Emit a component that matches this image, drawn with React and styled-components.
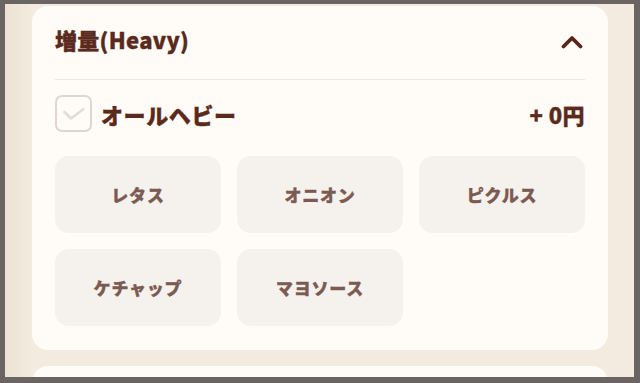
import React from "react";
import styled, { createGlobalStyle } from "styled-components";

const Global = createGlobalStyle`
  html, body { margin: 0; padding: 0; }
  body { font-family: "Noto Sans CJK JP", "Noto Sans", sans-serif; }
  * { box-sizing: border-box; }
`;

const Frame = styled.div`
  width: 640px;
  height: 383px;
  border-style: solid;
  border-color: #6a6462;
  border-width: 4px 6px 6px 5px;
  overflow: hidden;
`;

const Scroller = styled.div`
  height: 100%;
  background: linear-gradient(to right, #ece2d4 0px, #f3ebdf 26px, #f3ebdf 100%);
  padding: 2px 26px 0 27px;
  display: flex;
  flex-direction: column;
  gap: 16px;
`;

const Card = styled.section`
  background: #fffcf8;
  border-radius: 16px;
  padding: 0 23px 24px;
  flex-shrink: 0;
  min-height: ${(p) => p.$minH || 0}px;
`;

const Header = styled.div`
  height: 74px;
  display: flex;
  align-items: center;
  justify-content: space-between;
  border-bottom: 1px solid #eee8e2;
  padding-bottom: 8px;
`;

const Heavy = `
  font-weight: 900;
  -webkit-text-stroke: 0.35px currentColor;
`;

const Title = styled.h2`
  margin: 0;
  font-size: 22px;
  ${Heavy}
  color: #5a2a1c;
  letter-spacing: 0.3px;
`;

const ToggleIcon = styled.svg`
  width: 22px;
  height: 14px;
  margin-right: 2px;
  margin-top: 7px;
`;

const OptionRow = styled.label`
  display: flex;
  align-items: center;
  margin-top: 15px;
  height: 37px;
  gap: 9px;
`;

const Box = styled.span`
  width: 37px;
  height: 37px;
  border: 2px solid #dfd6d0;
  border-radius: 7px;
  background: #fffcf8;
  display: flex;
  align-items: center;
  justify-content: center;
  flex-shrink: 0;
`;

const OptionName = styled.span`
  font-size: 22px;
  ${Heavy}
  color: #5a2a1c;
  flex: 1;
  letter-spacing: 0.6px;
`;

const Price = styled.span`
  font-size: 22px;
  ${Heavy}
  color: #5a2a1c;
  letter-spacing: 0.4px;
`;

const Grid = styled.div`
  display: grid;
  grid-template-columns: repeat(3, 1fr);
  grid-auto-rows: 77px;
  gap: 16px;
  margin-top: 24px;
`;

const Chip = styled.button`
  border: none;
  border-radius: 14px;
  background: #f5f1ed;
  color: #7b5a52;
  font-family: inherit;
  font-size: 17px;
  ${Heavy}
  letter-spacing: 0.8px;
  display: flex;
  align-items: center;
  justify-content: center;
  padding: 0;
`;

const items = ["レタス", "オニオン", "ピクルス", "ケチャップ", "マヨソース"];

export default function App() {
  return (
    <>
      <Global />
      <Frame>
        <Scroller>
          <Card>
            <Header>
              <Title>増量(Heavy)</Title>
              <ToggleIcon viewBox="0 0 22 14" aria-hidden="true">
                <path
                  d="M2.5 11.5 L11 3 L19.5 11.5"
                  fill="none"
                  stroke="#5a2418"
                  strokeWidth="3.8"
                  strokeLinecap="round"
                  strokeLinejoin="round"
                />
              </ToggleIcon>
            </Header>
            <OptionRow>
              <Box>
                <svg width="24" height="14" viewBox="0 0 24 14" aria-hidden="true">
                  <path
                    d="M2.5 5 L9 11.5 L21.5 2"
                    fill="none"
                    stroke="#e4dcd6"
                    strokeWidth="2.6"
                    strokeLinecap="round"
                    strokeLinejoin="round"
                  />
                </svg>
              </Box>
              <OptionName>オールヘビー</OptionName>
              <Price>+ 0円</Price>
            </OptionRow>
            <Grid>
              {items.map((t) => (
                <Chip key={t}>{t}</Chip>
              ))}
            </Grid>
          </Card>
          <Card $minH={60} />
        </Scroller>
      </Frame>
    </>
  );
}
